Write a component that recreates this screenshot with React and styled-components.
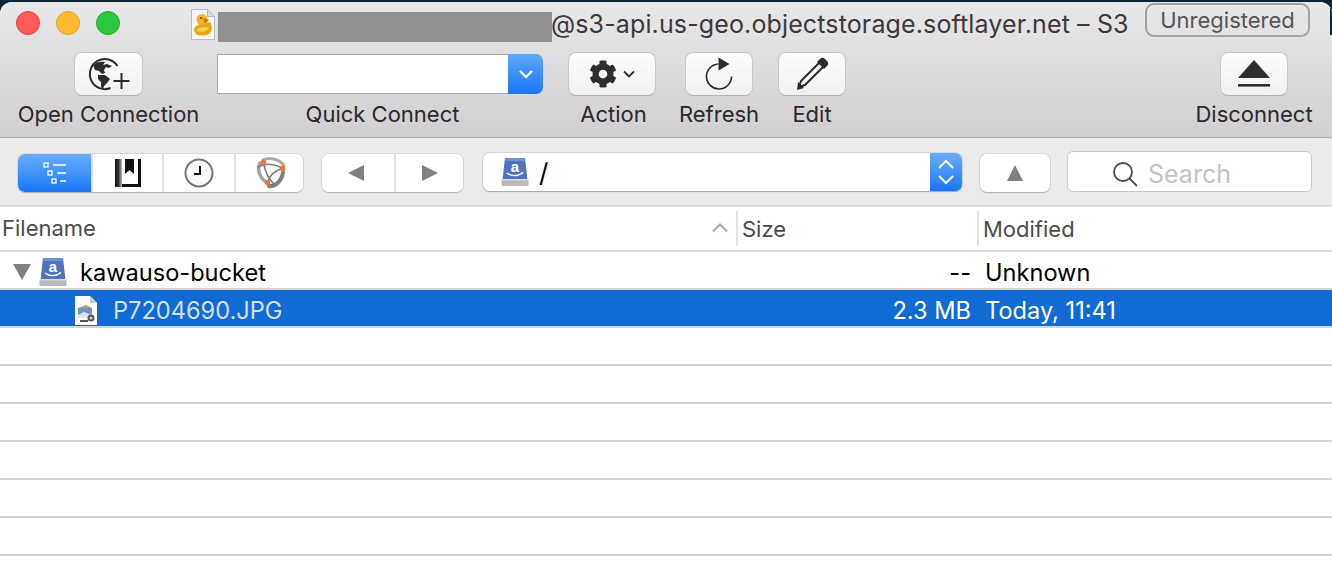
import React from "react";
import styled, { createGlobalStyle } from "styled-components";
import { FaCog } from "react-icons/fa";

const Global = createGlobalStyle`
  html, body {
    margin: 0;
    padding: 0;
    background: #0e2433;
    overflow: hidden;
  }
  body {
    font-family: Inter, "Liberation Sans", sans-serif;
  }
`;

const DriveIcon = ({ size = 34 }) => (
  <svg width={size} height={size} viewBox="0 0 30 30">
    <path d="M5 1h20l2.500 22h-25z" fill="#4f74bd" />
    <path d="M5 1h20l.3 3H4.700z" fill="#6f90cf" />
    <rect x="1.500" y="22" width="27" height="7" rx="1.500" fill="#b9b9b9" />
    <rect x="1.500" y="22" width="27" height="1.400" fill="#dedede" />
    <text x="15" y="15" fontSize="15" fontFamily="Liberation Sans" fontWeight="700" fill="#fff" textAnchor="middle">a</text>
    <path d="M7 16c4 3.400 11 3.400 15.500 0" fill="none" stroke="#fff" strokeWidth="1.300" />
    <path d="M21 15l2.400.3-.8 2.100z" fill="#fff" />
  </svg>
);

const App = () => (
  <>
    <Global />
    <Window>
      <Chrome>
        <TitleBar>
          <Lights>
            <Light $bg="#fc5b57" $edge="#e0443e" />
            <Light $bg="#fdbc2e" $edge="#dfa023" />
            <Light $bg="#2ac840" $edge="#1fab2e" />
          </Lights>
          <DocIcon width="24" height="31" viewBox="0 0 24 31">
            <path d="M.5.5h16l7 7v23H.5z" fill="#f7f7f7" stroke="#b8b8b8" />
            <path d="M16.500.5v7h7z" fill="#dcdcdc" stroke="#b8b8b8" />
            <path d="M3 21c0-3 3-5 6-6l10-2c2 3 3 9-1 12-3 2-11 2-13 0-1-1-2-3-2-4z" fill="#eaa514" />
            <circle cx="11" cy="10.500" r="5.500" fill="#f0b41c" />
            <path d="M5 21c4-3 9-4 13-2-2 4-10 5-13 2z" fill="#fbd544" />
            <path d="M12 9l6 2-4 3.500z" fill="#e8601c" />
            <circle cx="10" cy="9" r="1" fill="#5a3a10" />
          </DocIcon>
          <Redacted />
          <Title>@s3-api.us-geo.objectstorage.softlayer.net – S3</Title>
          <Badge>Unregistered</Badge>
        </TitleBar>
        <Toolbar>
          <ToolItem $w={181}>
            <ToolButton $w={69}>
              <svg width="48" height="36" viewBox="0 0 48 36">
                <path d="M32.500 10A15 15 0 1 0 25.500 32" fill="none" stroke="#2b2b2b" strokeWidth="2" />
                <path d="M8 9c3-3 8-4 12-3l-2 3 4-1 5 2-3 2-3-1-2 3 1 3-3 1-3-3-4-1z" fill="#2b2b2b" />
                <path d="M13 19h7l5 4-3 4-3 3-1 3-2-2v-5l-3-3z" fill="#2b2b2b" />
                <path d="M36.500 17v16M28.500 25h16" stroke="#2b2b2b" strokeWidth="2" />
              </svg>
            </ToolButton>
            <ToolLabel>Open Connection</ToolLabel>
          </ToolItem>
          <ToolItem $w={326} $ml={18}>
            <Combo>
              <ComboInput />
              <ComboArrow>
                <svg width="16" height="10" viewBox="0 0 16 10">
                  <path d="M2 2l6 6 6-6" fill="none" stroke="#fff" strokeWidth="2.400" />
                </svg>
              </ComboArrow>
            </Combo>
            <ToolLabel $shift={5}>Quick Connect</ToolLabel>
          </ToolItem>
          <ToolItem $w={88} $ml={25}>
            <ToolButton $w={88}>
              <FaCog size={28} color="#2e2e2e" />
              <svg width="12" height="8" viewBox="0 0 12 8">
                <path d="M1 1.500l5 5 5-5" fill="none" stroke="#2e2e2e" strokeWidth="1.800" />
              </svg>
            </ToolButton>
            <ToolLabel $shift={3}>Action</ToolLabel>
          </ToolItem>
          <ToolItem $w={78} $ml={24}>
            <ToolButton $w={68}>
              <svg width="32" height="36" viewBox="0 0 32 36">
                <path d="M15 8A12.500 12.500 0 1 0 28.500 20.500" fill="none" stroke="#2b2b2b" strokeWidth="1.600" />
                <path d="M15.500 1.500l11 6.500-11 6.500z" fill="#2b2b2b" />
              </svg>
            </ToolButton>
            <ToolLabel>Refresh</ToolLabel>
          </ToolItem>
          <ToolItem $w={68} $ml={20}>
            <ToolButton $w={68}>
              <svg width="34" height="34" viewBox="0 0 34 34">
                <path d="M25 5L6 24l-2 6 6-2L29 9z" fill="none" stroke="#2b2b2b" strokeWidth="2" strokeLinejoin="round" />
                <path d="M25.500 1.500c1.500-1 3-1 4.500.5l2 2c1.500 1.500 1.500 3 .5 4.500L29 12l-7-7z" fill="#2b2b2b" />
                <path d="M3 25l6 6-7 2z" fill="#2b2b2b" />
              </svg>
            </ToolButton>
            <ToolLabel>Edit</ToolLabel>
          </ToolItem>
          <ToolItem $w={116} $push>
            <ToolButton $w={68}>
              <svg width="34" height="30" viewBox="0 0 34 30">
                <path d="M17 1l16 18H1z" fill="#2e2e2e" />
                <rect x="1" y="25" width="32" height="2.600" fill="#2e2e2e" />
              </svg>
            </ToolButton>
            <ToolLabel>Disconnect</ToolLabel>
          </ToolItem>
        </Toolbar>
      </Chrome>
      <NavBar>
        <Segmented>
          <Segment $w={73} $active>
            <svg width="24" height="22" viewBox="0 0 24 22">
              <g fill="none" stroke="#fff" strokeWidth="1.300">
                <rect x="1" y="1" width="4" height="4" />
                <rect x="5" y="9" width="4" height="4" />
                <rect x="9" y="17" width="4" height="4" />
              </g>
              <path d="M10 3h13M14 11h9M17 19h6" stroke="#fff" strokeWidth="1.500" />
            </svg>
          </Segment>
          <Segment $w={71}>
            <svg width="26" height="28" viewBox="0 0 26 28">
              <defs>
                <linearGradient id="bookFade" x1="0" x2="1" y1="0" y2="0">
                  <stop offset="0" stopColor="#111" />
                  <stop offset="0.5" stopColor="#333" />
                  <stop offset="1" stopColor="#bbb" />
                </linearGradient>
              </defs>
              <rect width="7" height="28" fill="url(#bookFade)" />
              <rect x="7" width="19" height="28" fill="#111" />
              <path d="M7 0h3v15l4.500-4 4.500 4V0h4v25H7z" fill="#fff" />
            </svg>
          </Segment>
          <Segment $w={72}>
            <svg width="30" height="30" viewBox="0 0 30 30">
              <circle cx="15" cy="15" r="13.500" fill="#fafafa" stroke="#777" strokeWidth="2" />
              <path d="M16 8v8h-6" fill="none" stroke="#111" strokeWidth="2" />
            </svg>
          </Segment>
          <Segment $w={69}>
            <svg width="32" height="32" viewBox="0 0 32 32">
              <g fill="none" strokeLinecap="round">
                <path d="M9 3C16 0 26 2 30 9" stroke="#aaa" strokeWidth="3" />
                <path d="M6 6C3 12 5 20 12 25" stroke="#a2a2a2" strokeWidth="3.500" />
                <path d="M15 29C21 30 28 24 29 15" stroke="#808080" strokeWidth="4" />
                <path d="M9.500 5.500C11 14 14 22 21 28M28.500 11.500C20 14 15 19 13.500 25.500M4 10C11 6 20 7 28 11" stroke="#7a7a7a" strokeWidth="1.500" />
              </g>
              <circle cx="9.500" cy="5.500" r="2.700" fill="#ee7434" />
              <circle cx="28.500" cy="11.500" r="2.700" fill="#ee7434" />
              <circle cx="13.500" cy="25.500" r="2.700" fill="#ee7434" />
            </svg>
          </Segment>
        </Segmented>
        <Segmented $ml={19}>
          <Segment $w={72} $pr={4}>
            <svg width="16" height="16" viewBox="0 0 16 16"><path d="M0 8l16-8v16z" fill="#808080" /></svg>
          </Segment>
          <Segment $w={69}>
            <svg width="16" height="16" viewBox="0 0 16 16"><path d="M16 8L0 0v16z" fill="#808080" /></svg>
          </Segment>
        </Segmented>
        <PathCombo>
          <PathInput>
            <DriveIcon size={30} />
            <PathText>/</PathText>
          </PathInput>
          <PathStepper>
            <svg width="18" height="26" viewBox="0 0 18 26">
              <path d="M2 9l7-7 7 7M2 17l7 7 7-7" fill="none" stroke="#fff" strokeWidth="2" />
            </svg>
          </PathStepper>
        </PathCombo>
        <UpButton>
          <svg width="16" height="16" viewBox="0 0 16 16"><path d="M8 0l8 16H0z" fill="#808080" /></svg>
        </UpButton>
        <SearchBox>
          <svg width="26" height="26" viewBox="0 0 26 26">
            <circle cx="11" cy="11" r="9" fill="none" stroke="#4d4d4d" strokeWidth="1.800" />
            <path d="M17.500 17.500L25 25" stroke="#4d4d4d" strokeWidth="1.800" />
          </svg>
          <SearchText>Search</SearchText>
        </SearchBox>
      </NavBar>
      <HeaderRow>
        <HeadName>
          <HeadText>Filename</HeadText>
          <svg width="16" height="10" viewBox="0 0 16 10">
            <path d="M1 8.500l7-7 7 7" fill="none" stroke="#a8a8a8" strokeWidth="2" />
          </svg>
        </HeadName>
        <HeadCell $w={241}><HeadText>Size</HeadText></HeadCell>
        <HeadCell><HeadText>Modified</HeadText></HeadCell>
      </HeaderRow>
      <Rows>
        <Row>
          <NameCell $indent={13}>
            <svg width="18" height="16" viewBox="0 0 18 16"><path d="M0 0h18L9 16z" fill="#808080" /></svg>
            <IconSlot $ml={7}><DriveIcon size={30} /></IconSlot>
            <NameText $ml={12}>kawauso-bucket</NameText>
          </NameCell>
          <SizeCell>--</SizeCell>
          <DateCell>Unknown</DateCell>
        </Row>
        <Row $selected>
          <NameCell $indent={75}>
            <svg width="22" height="29" viewBox="0 0 22 29">
              <path d="M0 0h15l7 7v22H0z" fill="#fff" />
              <path d="M15 0v7h7z" fill="#ccc" />
              <rect x="3" y="12" width="14" height="10" fill="#6b95c9" />
              <path d="M3 12l8-3 6 3z" fill="#b79a5e" />
              <path d="M3 19l6-3 8 3v3H3z" fill="#dbe6f2" />
              <circle cx="16" cy="22" r="3.500" fill="#555" />
              <circle cx="16" cy="22" r="1.500" fill="#d0d0d0" />
              <path d="M5 24h8v2H5z" fill="#555" />
            </svg>
            <NameText $ml={16} $dim>P7204690.JPG</NameText>
          </NameCell>
          <SizeCell>2.3 MB</SizeCell>
          <DateCell>Today, 11:41</DateCell>
        </Row>
        {[0, 1, 2, 3, 4, 5].map((i) => (
          <Row key={i} />
        ))}
      </Rows>
    </Window>
  </>
);

export default App;

const Window = styled.div`
  position: relative;
  width: 1332px;
  height: 582px;
  margin-top: 2px;
  background: #fff;
  border-radius: 12px 12px 0 0;
  overflow: hidden;
  display: flex;
  flex-direction: column;

  &::after {
    content: "";
    position: absolute;
    top: 0;
    right: 0;
    width: 2px;
    height: 33px;
    background: #0e2433;
  }
`;

const Chrome = styled.div`
  height: 136px;
  flex-shrink: 0;
  box-sizing: border-box;
  background: linear-gradient(#e9e8e9, #d1cfd1);
  border-bottom: 1px solid #a9a8a9;
`;

const TitleBar = styled.div`
  height: 42px;
  display: flex;
  align-items: center;
  padding-left: 16px;
`;

const Lights = styled.div`
  display: flex;
  gap: 16px;
`;

const Light = styled.span`
  width: 24px;
  height: 24px;
  box-sizing: border-box;
  border-radius: 50%;
  background: ${(p) => p.$bg};
  border: 1px solid ${(p) => p.$edge};
`;

const DocIcon = styled.svg`
  margin-left: 71px;
  margin-top: 2px;
`;

const Redacted = styled.div`
  width: 334px;
  height: 30px;
  margin-left: 3px;
  margin-top: 8px;
  background: #909090;
`;

const Title = styled.div`
  width: 593px;
  margin-top: 2px;
  text-indent: -1px;
  font-size: 25px;
  letter-spacing: 0.13px;
  color: #3b393b;
  white-space: nowrap;
`;

const Badge = styled.div`
  width: 165px;
  height: 34px;
  box-sizing: border-box;
  margin-top: -7px;
  border: 2px solid #a3a2a3;
  border-radius: 9px;
  font-size: 22px;
  line-height: 30px;
  text-align: center;
  color: #555;
`;

const Toolbar = styled.div`
  display: flex;
  padding: 8px 20px 0 18px;
`;

const ToolItem = styled.div`
  width: ${(p) => p.$w}px;
  margin-left: ${(p) => (p.$push ? "auto" : `${p.$ml || 0}px`)};
  display: flex;
  flex-direction: column;
  align-items: center;
`;

const ToolButton = styled.div`
  width: ${(p) => p.$w}px;
  height: 44px;
  box-sizing: border-box;
  display: flex;
  align-items: center;
  justify-content: center;
  gap: 6px;
  background: linear-gradient(#fdfdfd, #f1f0f1);
  border: 1px solid #c8c7c8;
  border-bottom-color: #b3b2b3;
  border-radius: 8px;
`;

const ToolLabel = styled.div`
  margin-top: 4px;
  padding-left: ${(p) => p.$shift || 0}px;
  font-size: 22px;
  line-height: 28px;
  color: #2a282a;
  white-space: nowrap;
`;

const Combo = styled.div`
  width: 100%;
  height: 40px;
  margin-top: 2px;
  margin-bottom: 2px;
  display: flex;
`;

const ComboInput = styled.div`
  flex: 1;
  background: #fff;
  border: 1px solid #aaa9aa;
  border-right: 0;
`;

const ComboArrow = styled.div`
  width: 35px;
  display: flex;
  align-items: center;
  justify-content: center;
  background: linear-gradient(#5fa8fb, #1a76f6);
  border-radius: 0 7px 7px 0;
`;

const NavBar = styled.div`
  height: 69px;
  flex-shrink: 0;
  box-sizing: border-box;
  display: flex;
  align-items: flex-start;
  padding: 15px 20px 0 18px;
  background: #ebebeb;
  border-bottom: 2px solid #dbdbdb;
`;

const Segmented = styled.div`
  display: flex;
  height: 38px;
  margin-top: 1px;
  margin-left: ${(p) => p.$ml || 0}px;
  box-sizing: border-box;
  background: #fff;
  border-radius: 7px;
  overflow: hidden;
  box-shadow: 0 1px 1px #b5b5b5, 0 0 0 1px #d8d8d8;
`;

const Segment = styled.div`
  width: ${(p) => p.$w}px;
  height: 100%;
  box-sizing: border-box;
  padding-right: ${(p) => p.$pr || 0}px;
  display: flex;
  align-items: center;
  justify-content: center;
  background: ${(p) => (p.$active ? "linear-gradient(#69aefb, #1a75f6)" : "#fff")};
  & + & {
    border-left: 2px solid #e2e2e2;
  }
`;

const PathCombo = styled.div`
  width: 479px;
  height: 38px;
  margin-left: 20px;
  display: flex;
  border-radius: 7px;
  overflow: hidden;
  box-shadow: 0 1px 1px #a8a8a8, 0 0 0 1px #d4d4d4;
`;

const PathInput = styled.div`
  flex: 1;
  display: flex;
  align-items: center;
  padding-left: 17px;
  background: #fff;
`;

const PathText = styled.span`
  margin-left: 9px;
  font-size: 26px;
  color: #000;
`;

const PathStepper = styled.div`
  width: 32px;
  display: flex;
  align-items: center;
  justify-content: center;
  background: linear-gradient(#69aefb, #1a75f6);
`;

const UpButton = styled.div`
  width: 70px;
  height: 38px;
  margin-top: 1px;
  margin-left: 18px;
  display: flex;
  align-items: center;
  justify-content: center;
  background: #fff;
  border-radius: 7px;
  box-shadow: 0 1px 1px #b5b5b5, 0 0 0 1px #d8d8d8;
`;

const SearchBox = styled.div`
  width: 245px;
  height: 41px;
  margin-left: 17px;
  margin-top: -2px;
  box-sizing: border-box;
  display: flex;
  align-items: center;
  gap: 10px;
  padding: 4px 0 0 44px;
  background: #fff;
  border: 1px solid #c9c9c9;
  border-radius: 6px;
`;

const SearchText = styled.span`
  font-size: 25px;
  color: #c4c4c4;
`;

const HeaderRow = styled.div`
  height: 45px;
  flex-shrink: 0;
  box-sizing: border-box;
  padding-bottom: 2px;
  display: flex;
  background: #fff;
  border-bottom: 2px solid #dcdcdc;
`;

const HeadName = styled.div`
  width: 736px;
  box-sizing: border-box;
  display: flex;
  align-items: center;
  justify-content: space-between;
  padding: 0 8px 0 2px;
`;

const HeadCell = styled.div`
  ${(p) => (p.$w ? `width: ${p.$w}px;` : "flex: 1;")}
  box-sizing: border-box;
  display: flex;
  align-items: center;
  margin: 4px 0 2px;
  padding-left: 4px;
  border-left: 2px solid #e2e2e2;
`;

const HeadText = styled.span`
  font-size: 22px;
  color: #4d4b4d;
`;

const Rows = styled.div`
  flex: 1;
  background: #fff;
`;

const Row = styled.div`
  height: 38px;
  box-sizing: border-box;
  padding-top: 4px;
  display: flex;
  align-items: center;
  border-bottom: 2px solid #d4d4d4;
  font-size: 23.600px;
  color: ${(p) => (p.$selected ? "#fff" : "#000")};
  background: ${(p) => (p.$selected ? "#126bd3" : "#fff")};
`;

const NameCell = styled.div`
  width: 737px;
  box-sizing: border-box;
  display: flex;
  align-items: center;
  padding-left: ${(p) => p.$indent}px;
`;

const IconSlot = styled.div`
  display: flex;
  margin-left: ${(p) => p.$ml}px;
`;

const NameText = styled.span`
  margin-left: ${(p) => p.$ml}px;
  color: ${(p) => (p.$dim ? "#d3dff5" : "inherit")};
`;

const SizeCell = styled.div`
  width: 234px;
  text-align: right;
`;

const DateCell = styled.div`
  margin-left: 14px;
`;
